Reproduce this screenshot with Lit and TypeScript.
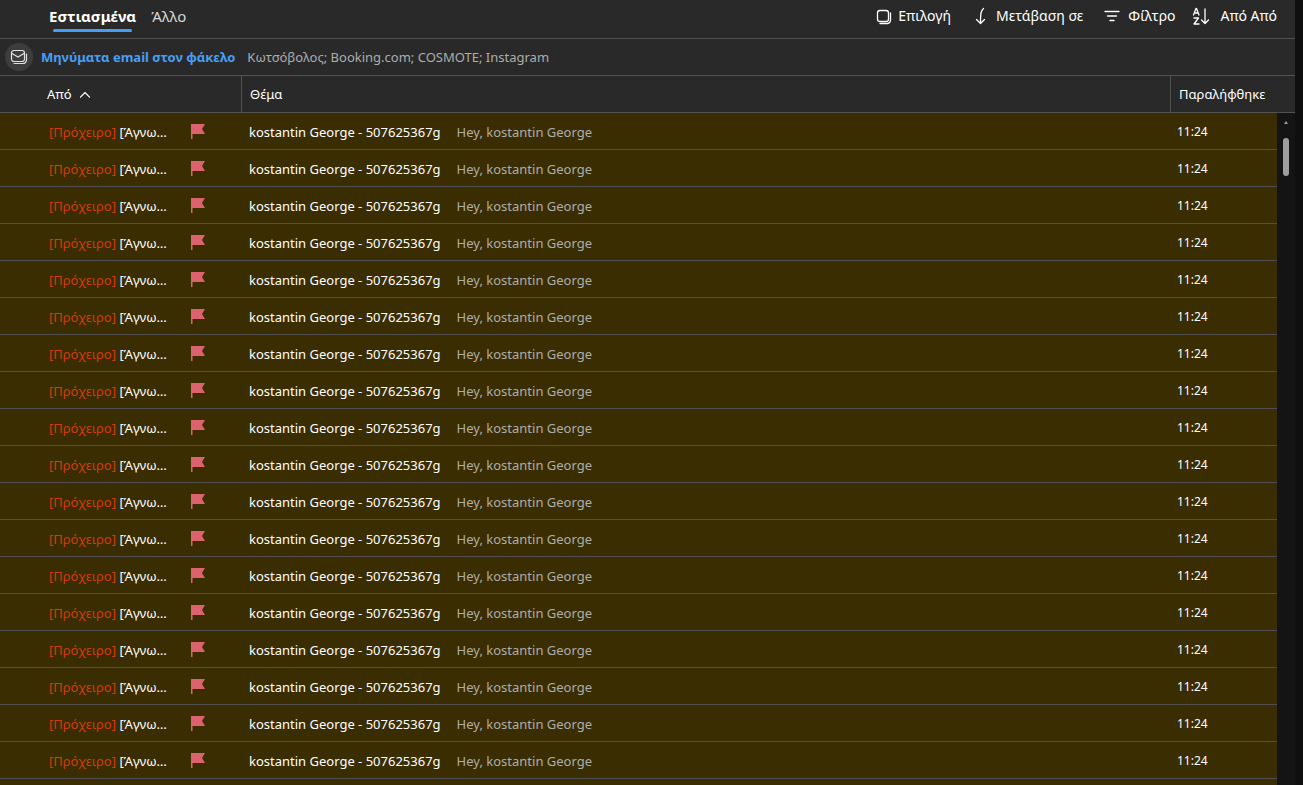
import { LitElement, html, css, svg } from "lit";
import { customElement, property } from "lit/decorators.js";

interface Message {
  draft: string;
  from: string;
  subject: string;
  preview: string;
  time: string;
}

const MESSAGES: Message[] = Array.from({ length: 19 }, () => ({
  draft: "[Πρόχειρο]",
  from: "[Άγνωστος]",
  subject: "kostantin George - 507625367g",
  preview: "Hey, kostantin George",
  time: "11:24",
}));

const ICONS = {
  select: svg`<rect x="4.5" y="3.5" width="11" height="11" rx="2.5"/><path d="M7 16.500h7.500a3.500 3.500 0 0 0 3-3.500V6"/>`,
  jump: svg`<path d="M12.500 1.500C10 3.500 9.500 6 9.500 16M5.500 12.500l4 4 4-4"/>`,
  filter: svg`<path d="M2 4.500h14M4.500 9h9M7 13.500h4"/>`,
  sort: svg`<path d="M-2.500 8L0 1.500h.500L3 8M-1.500 6H2M-2 11h4.500L-2 17h5M9 2v14.500M5.500 13L9 16.500 12.500 13"/>`,
  mail: svg`<rect x="1.500" y="1.500" width="13" height="11" rx="2.500"/><path d="M2 4.500l6 3.500 6-3.500M4 14.500h9a3.500 3.500 0 0 0 3.500-3.500V5"/>`,
};

@customElement("mail-toolbar")
class MailToolbar extends LitElement {
  static styles = css`
    :host {
      display: flex;
      justify-content: space-between;
      height: 38px;
      padding: 0 18px 0 44px;
      border-bottom: 1px solid #525252;
    }
    .tabs,
    .actions {
      display: flex;
    }
    .actions {
      gap: 20px;
      padding-bottom: 6px;
    }
    button {
      display: flex;
      align-items: center;
      border: 0;
      background: none;
      color: #fff;
      font: inherit;
      padding: 0;
      white-space: nowrap;
    }
    .tab {
      flex-direction: column;
      font-size: 15px;
      line-height: 20px;
      padding: 6px 5px 0;
      margin-right: 5px;
      color: #d6d6d6;
    }
    .tab.active {
      font-weight: 700;
      color: #fff;
    }
    .tab.active::after {
      content: "";
      align-self: stretch;
      height: 3px;
      margin: 3px 4px 0;
      border-radius: 2px;
      background: #479ef5;
    }
    .action {
      gap: 7px;
      font-size: 14px;
    }
    svg {
      overflow: visible;
      fill: none;
      stroke: #fff;
      stroke-width: 1.3;
      stroke-linecap: round;
      stroke-linejoin: round;
    }
  `;

  private action(icon: keyof typeof ICONS, label: string) {
    return html`<button class="action">
      <svg width="18" height="18" viewBox="0 0 18 18" aria-hidden="true">${ICONS[icon]}</svg>${label}
    </button>`;
  }

  render() {
    return html`
      <div class="tabs">
        <button class="tab active">Εστιασμένα</button>
        <button class="tab">Άλλο</button>
      </div>
      <div class="actions">
        ${this.action("select", "Επιλογή")} ${this.action("jump", "Μετάβαση σε")}
        ${this.action("filter", "Φίλτρο")} ${this.action("sort", "Από Από")}
      </div>
    `;
  }
}

@customElement("message-table")
class MessageTable extends LitElement {
  @property({ attribute: false }) messages: Message[] = [];

  static styles = css`
    :host {
      display: block;
      flex: 1;
      min-width: 0;
    }
    table {
      width: 100%;
      table-layout: fixed;
      border-collapse: separate;
      border-spacing: 0;
    }
    .col-from {
      width: 241px;
    }
    .col-time {
      width: 107px;
    }
    th,
    td {
      box-sizing: border-box;
      height: 37px;
      padding: 0 0 0 8px;
      border-bottom: 1px solid #525252;
      text-align: left;
      font-weight: 400;
      white-space: nowrap;
      overflow: hidden;
    }
    th + th {
      border-left: 1px solid #525252;
    }
    th:first-child {
      padding-left: 47px;
    }
    .sort {
      border: 0;
      padding: 0;
      background: none;
      color: inherit;
      font: inherit;
    }
    .sort svg {
      margin: 0 0 1px 8px;
      fill: none;
      stroke: #fff;
      stroke-width: 1.2;
    }
    td {
      padding-top: 2px;
      background: #3a2d02;
      border-color: #504e50;
    }
    .sender {
      display: flex;
      align-items: center;
      padding-left: 41px;
    }
    .name {
      width: 122px;
      overflow: hidden;
      text-overflow: ellipsis;
    }
    .draft {
      color: #d73b09;
    }
    .flag {
      flex: none;
      margin: 0 0 2px 20px;
    }
    .preview {
      margin-left: 16px;
      color: #adadad;
    }
    .time {
      padding-left: 7px;
      font-size: 12px;
    }
  `;

  render() {
    return html`
      <table>
        <colgroup>
          <col class="col-from" />
          <col />
          <col class="col-time" />
        </colgroup>
        <thead>
          <tr>
            <th scope="col">
              <button class="sort">
                Από<svg width="10" height="6" viewBox="0 0 10 6" aria-hidden="true"><path d="M0 5.500l5-5 5 5" /></svg>
              </button>
            </th>
            <th scope="col">Θέμα</th>
            <th scope="col">Παραλήφθηκε</th>
          </tr>
        </thead>
        <tbody>
          ${this.messages.map(
            (m) => html`<tr>
              <td>
                <div class="sender">
                  <div class="name"><span class="draft">${m.draft}</span> ${m.from}</div>
                  <svg class="flag" width="14" height="15" viewBox="0 0 14 15" aria-hidden="true">
                    <path d="M0 0h14l-3 5 3 5H1.500v5H0z" fill="#dc626d" />
                  </svg>
                </div>
              </td>
              <td>${m.subject}<span class="preview">${m.preview}</span></td>
              <td class="time">${m.time}</td>
            </tr>`
          )}
        </tbody>
      </table>
    `;
  }
}

@customElement("app-root")
class AppRoot extends LitElement {
  static styles = css`
    :host {
      display: flex;
      height: 100vh;
      overflow: hidden;
      background: #0f0f0f;
      color: #fff;
      font: 13px/20px "Noto Sans", "Open Sans", sans-serif;
    }
    .pane {
      flex: 1;
      min-width: 0;
      display: flex;
      flex-direction: column;
      margin-right: 8px;
      background: #292929;
    }
    .other {
      display: flex;
      align-items: center;
      height: 36px;
      padding-left: 5px;
      border-bottom: 1px solid #525252;
      white-space: nowrap;
    }
    .badge {
      display: grid;
      place-items: center;
      width: 28px;
      height: 28px;
      border-radius: 50%;
      background: #3d3d3d;
    }
    .badge svg {
      fill: none;
      stroke: #e0e0e0;
      stroke-width: 1.2;
      stroke-linecap: round;
    }
    .link {
      margin: 0 12px 0 8px;
      color: #479ef5;
      font-weight: 700;
      text-decoration: none;
    }
    .senders {
      color: #adadad;
    }
    .list {
      flex: 1;
      min-height: 0;
      display: flex;
      overflow: hidden;
    }
    .gutter {
      display: flex;
      flex-direction: column;
      width: 18px;
    }
    .corner {
      height: 36px;
      border-bottom: 1px solid #525252;
    }
    .track {
      flex: 1;
      display: flex;
      flex-direction: column;
      align-items: center;
      background: #141414;
    }
    .arrow {
      margin: 8px 0 14px;
      fill: #9f9f9f;
    }
    .thumb {
      width: 6px;
      height: 38px;
      border-radius: 3px;
      background: #9f9f9f;
    }
  `;

  render() {
    return html`
      <main class="pane">
        <mail-toolbar></mail-toolbar>
        <div class="other">
          <span class="badge">
            <svg width="18" height="16" viewBox="0 0 18 16" aria-hidden="true">${ICONS.mail}</svg>
          </span>
          <a class="link" href="#">Μηνύματα email στον φάκελο</a>
          <span class="senders">Κωτσόβολος; Booking.com; COSMOTE; Instagram</span>
        </div>
        <div class="list">
          <message-table .messages=${MESSAGES}></message-table>
          <div class="gutter">
            <div class="corner"></div>
            <div class="track">
              <svg class="arrow" width="4" height="3" viewBox="0 0 4 3" aria-hidden="true"><path d="M0 3l2-3 2 3z" /></svg>
              <div class="thumb"></div>
            </div>
          </div>
        </div>
      </main>
    `;
  }
}
